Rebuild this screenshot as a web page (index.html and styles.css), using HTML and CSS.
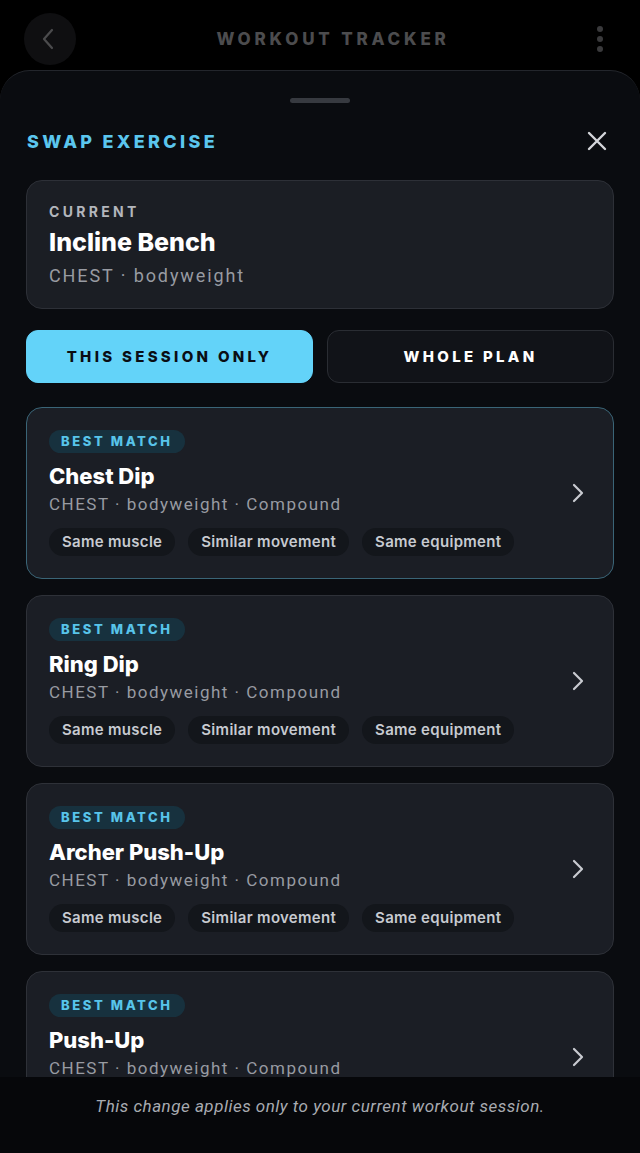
FILE: index.html
```html
<!DOCTYPE html>
<html lang="en">
<head>
    <meta charset="UTF-8">
    <meta name="viewport" content="width=device-width, initial-scale=1.0">
    <title>Swap Exercise</title>
    <link rel="stylesheet" href="styles.css">
</head>
<body>

    <!-- Top bar -->
    <div class="topbar">
        <button class="back-btn">
            <svg width="14" height="22" viewBox="0 0 14 22"><path d="M11 2 L3 11 L11 20" fill="none" stroke="#4b4b4d" stroke-width="2.2" stroke-linecap="round" stroke-linejoin="round"/></svg>
        </button>
        <div class="app-title">WORKOUT TRACKER</div>
        <div class="more">
            <span></span><span></span><span></span>
        </div>
    </div>

    <!-- Bottom sheet -->
    <div class="sheet">
        <div class="handle"></div>

        <div class="sheet-head">
            <h2>SWAP EXERCISE</h2>
            <button class="close-btn">
                <svg width="20" height="20" viewBox="0 0 20 20"><path d="M2 2 L18 18 M18 2 L2 18" fill="none" stroke="#d4d6da" stroke-width="2.4" stroke-linecap="round"/></svg>
            </button>
        </div>

        <div class="current-card">
            <div class="label">CURRENT</div>
            <div class="current-name">Incline Bench</div>
            <div class="meta">CHEST · bodyweight</div>
        </div>

        <div class="scope-toggle">
            <button class="scope active">THIS SESSION ONLY</button>
            <button class="scope">WHOLE PLAN</button>
        </div>

        <div class="option-list" id="optionList">
            <!-- options rendered by script below -->
        </div>

        <div class="sheet-footer">
            This change applies only to your current workout session.
        </div>
    </div>

    <script>
        const options = [
            { name: "Chest Dip", meta: "CHEST · bodyweight · Compound", selected: true },
            { name: "Ring Dip", meta: "CHEST · bodyweight · Compound" },
            { name: "Archer Push-Up", meta: "CHEST · bodyweight · Compound" },
            { name: "Push-Up", meta: "CHEST · bodyweight · Compound" }
        ];
        const reasons = ["Same muscle", "Similar movement", "Same equipment"];

        const list = document.getElementById('optionList');

        options.forEach(opt => {
            const card = document.createElement('div');
            card.className = 'option-card' + (opt.selected ? ' selected' : '');

            const info = document.createElement('div');
            info.className = 'option-info';

            const badge = document.createElement('span');
            badge.className = 'badge';
            badge.textContent = 'BEST MATCH';

            const name = document.createElement('div');
            name.className = 'option-name';
            name.textContent = opt.name;

            const meta = document.createElement('div');
            meta.className = 'meta';
            meta.textContent = opt.meta;

            const chips = document.createElement('div');
            chips.className = 'chips';
            reasons.forEach(r => {
                const chip = document.createElement('span');
                chip.className = 'chip';
                chip.textContent = r;
                chips.appendChild(chip);
            });

            info.appendChild(badge);
            info.appendChild(name);
            info.appendChild(meta);
            info.appendChild(chips);

            const arrow = document.createElement('div');
            arrow.className = 'arrow';
            arrow.innerHTML = '<svg width="14" height="20" viewBox="0 0 14 20"><path d="M3 2 L11 10 L3 18" fill="none" stroke="#c9cbd1" stroke-width="2.2" stroke-linecap="round" stroke-linejoin="round"/></svg>';

            card.appendChild(info);
            card.appendChild(arrow);
            list.appendChild(card);
        });
    </script>
</body>
</html>
```

FILE: styles.css
```css
* {
    box-sizing: border-box;
}

body {
    margin: 0;
    height: 1153px;
    overflow: hidden;
    background-color: #000;
    font-family: Inter, "Noto Sans", sans-serif;
    color: #fff;
}

button {
    font-family: inherit;
    cursor: pointer;
}

/* Top bar */
.topbar {
    height: 70px;
    padding: 13px 24px 0 24px;
    display: grid;
    grid-template-columns: 52px 1fr 52px;
    align-items: start;
}

.back-btn {
    width: 52px;
    height: 52px;
    border-radius: 50%;
    border: none;
    background-color: #0f0f11;
    display: flex;
    align-items: center;
    justify-content: center;
    padding: 0 4px 0 0;
}

.app-title {
    height: 52px;
    line-height: 52px;
    text-align: center;
    padding-left: 26px;
    font-size: 17px;
    font-weight: 800;
    letter-spacing: 3.8px;
    color: #4c4c4e;
}

.more {
    height: 52px;
    display: flex;
    flex-direction: column;
    align-items: flex-end;
    justify-content: center;
    gap: 4px;
    padding-right: 13px;
}

.more span {
    width: 6px;
    height: 6px;
    border-radius: 50%;
    background-color: #3a3a3c;
}

/* Sheet */
.sheet {
    height: 1083px;
    background-color: #0a0c10;
    border-top: 1px solid #23262c;
    border-radius: 30px 30px 0 0;
    display: flex;
    flex-direction: column;
}

.handle {
    width: 60px;
    height: 5px;
    border-radius: 3px;
    background-color: #373a40;
    margin: 27px auto 0 auto;
}

.sheet-head {
    height: 24px;
    margin: 26px 26px 0 27px;
    display: flex;
    align-items: center;
    justify-content: space-between;
}

.sheet-head h2 {
    margin: 0;
    font-size: 18px;
    font-weight: 800;
    letter-spacing: 3.3px;
    color: #5bc6ee;
}

.close-btn {
    border: none;
    background: none;
    padding: 0;
    width: 20px;
    height: 20px;
    margin-right: 7px;
}

.current-card {
    margin: 27px 26px 0 26px;
    background-color: #1b1e24;
    border: 1px solid #2d3037;
    border-radius: 16px;
    padding: 22px 22px 20px 22px;
}

.label {
    font-size: 14px;
    line-height: 18px;
    font-weight: 700;
    letter-spacing: 3.3px;
    color: #b3b6bc;
}

.current-name {
    margin-top: 6px;
    font-size: 25px;
    line-height: 30px;
    font-weight: 800;
}

.current-card .meta {
    margin-top: 7px;
    line-height: 24px;
    font-size: 18px;
    letter-spacing: 1.9px;
}

.meta {
    font-family: Roboto, "Noto Sans", sans-serif;
    font-size: 17px;
    line-height: 20px;
    letter-spacing: 1.5px;
    color: #989ba2;
}

/* Scope toggle */
.scope-toggle {
    margin: 21px 26px 0 26px;
    display: grid;
    grid-template-columns: 1fr 1fr;
    gap: 14px;
}

.scope {
    height: 53px;
    border-radius: 12px;
    border: 1px solid #2a2d33;
    background-color: #111318;
    color: #fff;
    font-size: 15px;
    font-weight: 800;
    letter-spacing: 3.3px;
}

.scope.active {
    background-color: #63d3f9;
    border-color: #63d3f9;
    color: #0a0d14;
}

/* Option list */
.option-list {
    flex: 1;
    min-height: 0;
    overflow: hidden;
    margin-top: 24px;
    padding: 0 26px;
    display: flex;
    flex-direction: column;
    gap: 16px;
}

.option-card {
    flex-shrink: 0;
    display: flex;
    align-items: center;
    background-color: #1b1e25;
    border: 1px solid #2e3138;
    border-radius: 16px;
    padding: 22px 28px 22px 22px;
}

.option-card.selected {
    border-color: #3a6577;
}

.option-info {
    flex: 1;
}

.badge {
    display: inline-block;
    height: 23px;
    line-height: 23px;
    padding: 0 12px;
    border-radius: 12px;
    background-color: #17313e;
    color: #58c4ea;
    font-size: 13px;
    font-weight: 800;
    letter-spacing: 2.6px;
}

.option-name {
    margin-top: 9px;
    font-size: 22px;
    line-height: 28px;
    font-weight: 800;
}

.option-info .meta {
    margin-top: 4px;
}

.chips {
    margin-top: 14px;
    display: flex;
    gap: 13px;
}

.chip {
    height: 28px;
    line-height: 28px;
    padding: 0 13px;
    border-radius: 14px;
    background-color: #13161b;
    color: #c7cad0;
    font-size: 15px;
    font-weight: 600;
    letter-spacing: 0.3px;
}

.arrow {
    width: 14px;
    display: flex;
}

/* Footer */
.sheet-footer {
    height: 76px;
    flex-shrink: 0;
    padding-top: 18px;
    text-align: center;
    font-family: Roboto, "Noto Sans", sans-serif;
    font-style: italic;
    font-size: 17px;
    line-height: 22px;
    letter-spacing: 0.5px;
    color: #a8abb1;
    background-color: #06070a;
}
```
